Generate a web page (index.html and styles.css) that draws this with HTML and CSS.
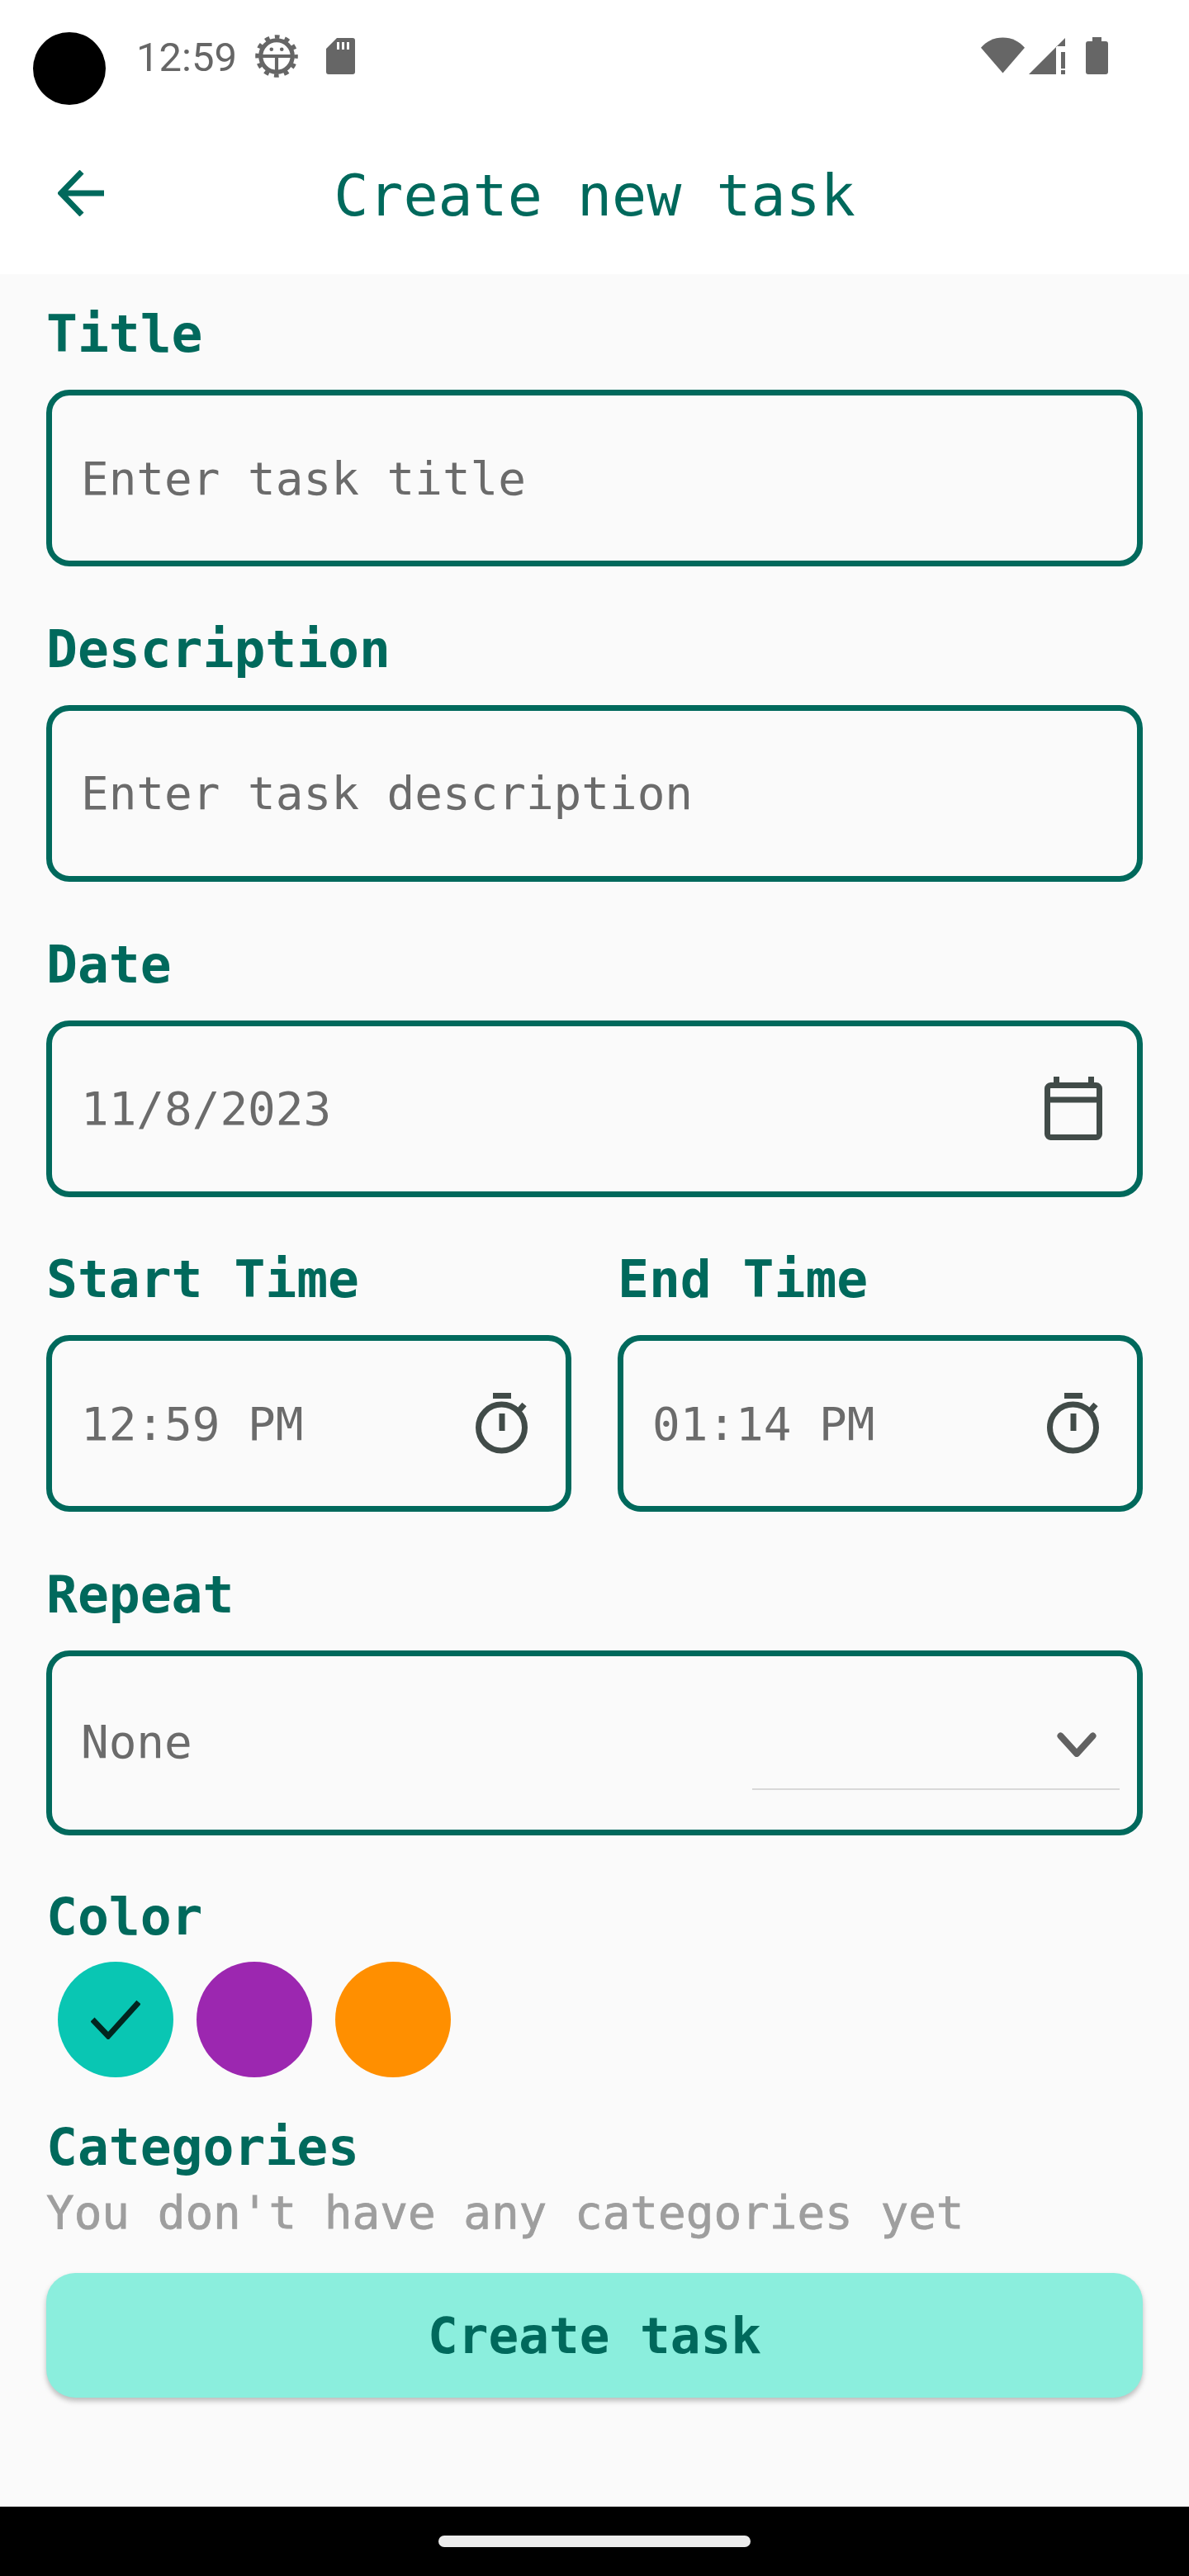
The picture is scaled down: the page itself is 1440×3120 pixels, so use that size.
FILE: index.html
```html
<!DOCTYPE html>
<html lang="en">
<head>
<meta charset="utf-8">
<title>Create new task</title>
<link rel="stylesheet" href="styles.css">
</head>
<body>
<div class="screen">
  <header class="top">
    <div class="status">
      <div class="status-left">
        <span class="camera"></span>
        <span class="clock">12:59</span>
        <svg class="ic-gear" viewBox="0 0 50 50"><circle cx="25" cy="25" r="22.600" fill="none" stroke="#666" stroke-width="4.400" stroke-dasharray="5.600 6.230" stroke-dashoffset="2.800"/><circle cx="25" cy="25" r="18.500" fill="#fff" stroke="#666" stroke-width="5"/><path class="st" d="M7 23h36v4H27v16h-4V27H7z"/><circle class="st" cx="19" cy="17" r="2.200"/><circle class="st" cx="31" cy="17" r="2.200"/></svg>
        <svg class="ic-sd" viewBox="0 0 35 44"><path fill-rule="evenodd" class="st" d="M13 0h19a3 3 0 0 1 3 3v38a3 3 0 0 1-3 3H3a3 3 0 0 1-3-3V13zM13 5v9h3V5zM19 5v9h3V5zM25 5v9h3V5z"/></svg>
      </div>
      <div class="status-right">
        <svg class="ic-wifi" viewBox="0 0 54 44"><path class="st" d="M0 12.500C7 4.500 16 0 27 0s20 4.500 27 12.500L27 44z"/></svg>
        <svg class="ic-signal" viewBox="0 0 44 44"><path class="st" d="M44 0v10H33v34H0zM39 17h5v20h-5zM39 39h5v5h-5z"/></svg>
        <svg class="ic-battery" viewBox="0 0 27 45"><path class="st" d="M8 0h11v5h5a3 3 0 0 1 3 3v34a3 3 0 0 1-3 3H3a3 3 0 0 1-3-3V8a3 3 0 0 1 3-3h5z"/></svg>
      </div>
    </div>
    <div class="appbar">
      <svg class="ic-back" viewBox="0 0 56 56"><path d="M56 28H4M29 2L4 28l25 26" fill="none" stroke="#00695c" stroke-width="7"/></svg>
      <h1 class="page-title">Create new task</h1>
    </div>
  </header>

  <main class="form">
    <section class="field">
      <label class="label">Title</label>
      <div class="box"><span class="value">Enter task title</span></div>
    </section>
    <section class="field">
      <label class="label">Description</label>
      <div class="box"><span class="value">Enter task description</span></div>
    </section>
    <section class="field">
      <label class="label">Date</label>
      <div class="box">
        <span class="value">11/8/2023</span>
        <svg class="ic-cal" viewBox="0 0 70 77"><path d="M3.500 14.500a4 4 0 0 1 4-4h55a4 4 0 0 1 4 4v55a4 4 0 0 1-4 4h-55a4 4 0 0 1-4-4zM3.500 28h63M14.500 0v10M56.500 0v10" fill="none" stroke="#414b48" stroke-width="7"/></svg>
      </div>
    </section>
    <div class="two-col">
      <section class="field">
        <label class="label">Start Time</label>
        <div class="box">
          <span class="value">12:59 PM</span>
          <svg class="ic-timer" viewBox="0 0 64 74"><circle cx="31.500" cy="42" r="28" fill="none" stroke="#414b48" stroke-width="7"/><path d="M21 3.500h22M32 25v21M52 22l7-8" fill="none" stroke="#414b48" stroke-width="7"/></svg>
        </div>
      </section>
      <section class="field">
        <label class="label">End Time</label>
        <div class="box">
          <span class="value">01:14 PM</span>
          <svg class="ic-timer" viewBox="0 0 64 74"><circle cx="31.500" cy="42" r="28" fill="none" stroke="#414b48" stroke-width="7"/><path d="M21 3.500h22M32 25v21M52 22l7-8" fill="none" stroke="#414b48" stroke-width="7"/></svg>
        </div>
      </section>
    </div>
    <section class="field">
      <label class="label">Repeat</label>
      <div class="box box-select">
        <span class="value">None</span>
        <svg class="ic-chev" viewBox="0 0 48 30"><path d="M4.500 4.500L24 26 43.500 4.500" fill="none" stroke="#616161" stroke-width="8" stroke-linecap="round" stroke-linejoin="round"/></svg>
        <span class="underline"></span>
      </div>
    </section>
    <section class="field field-color">
      <label class="label">Color</label>
      <div class="swatches">
        <span class="swatch teal"><svg class="ic-check" viewBox="0 0 60 48"><path d="M2 24l19 20L58 3" fill="none" stroke="#02251f" stroke-width="7"/></svg></span>
        <span class="swatch purple"></span>
        <span class="swatch orange"></span>
      </div>
    </section>
    <section class="field-cat">
      <label class="label">Categories</label>
      <p class="empty">You don't have any categories yet</p>
    </section>
    <button class="submit">Create task</button>
  </main>

  <nav class="navbar"><span class="pill"></span></nav>
</div>
</body>
</html>
```
FILE: styles.css
```css
* { box-sizing: border-box; }
html, body { margin: 0; padding: 0; }
body { background: #fafafa; font-family: "DejaVu Sans Mono", "Liberation Mono", monospace; letter-spacing: -0.002em; }
.screen { width: 1440px; height: 3120px; display: flex; flex-direction: column; background: #fafafa; }
.top { height: 332px; background: #fff; flex: none; }
.status { height: 135px; display: flex; justify-content: space-between; padding: 39px 98px 0 40px; }
.status-left { display: flex; align-items: flex-start; }
.camera { width: 88px; height: 88px; border-radius: 50%; background: #000; }
.clock { font-family: Roboto, sans-serif; font-size: 49px; line-height: 56px; color: #666; margin: 3px 0 0 37px; letter-spacing: 0; }
.st { fill: #666; }
.ic-gear { width: 52px; height: 52px; margin: 3px 0 0 22px; }
.ic-sd { width: 35px; height: 44px; margin: 7px 0 0 34px; }
.status-right { display: flex; align-items: flex-start; padding-top: 6px; }
.ic-wifi { width: 53px; height: 44px; }
.ic-signal { width: 44px; height: 44px; margin: 1px 0 0 5px; }
.ic-battery { width: 27px; height: 45px; margin-left: 25px; }
.appbar { height: 197px; position: relative; display: flex; align-items: flex-start; justify-content: center; }
.ic-back { position: absolute; left: 70px; top: 71px; width: 56px; height: 56px; }
.page-title { margin: 61px 0 0; font-size: 70px; line-height: 82px; font-weight: 400; color: #00695c; }
.form { flex: 1; padding: 31px 56px 0; display: flex; flex-direction: column; gap: 58.75px; }
.label { display: block; font-size: 63px; line-height: 83px; height: 83px; margin-bottom: 26px; font-weight: 700; color: #00695c; }
.box { height: 214px; border: 7px solid #00695c; border-radius: 28px; display: flex; align-items: center; justify-content: space-between; padding: 0 42px 0 35px; position: relative; }
.value { font-size: 56px; color: #6b6b6b; }
.ic-cal { width: 70px; height: 77px; }
.two-col { display: grid; grid-template-columns: 1fr 1fr; gap: 56px; }
.ic-timer { width: 64px; height: 74px; margin-right: 3px; }
.box-select { height: 224px; padding-bottom: 4px; }
.ic-chev { position: absolute; left: 1217px; top: 92px; width: 48px; height: 30px; }
.underline { position: absolute; left: 848px; right: 21px; top: 160px; height: 2px; background: #d8d8d8; }
.field-color { margin-top: -2px; }
.field-color .label { margin-bottom: 13px; }
.swatches { display: flex; gap: 28px; padding-left: 14px; }
.swatch { width: 140px; height: 140px; border-radius: 50%; display: flex; align-items: center; justify-content: center; }
.teal { background: #09c6b3; }
.purple { background: #9c27b0; }
.orange { background: #ff8f00; }
.ic-check { width: 60px; height: 48px; }
.field-cat { margin-top: -16px; }
.field-cat .label { margin: 0; }
.empty { margin: 0; font-size: 56px; line-height: 76px; color: #9e9e9e; -webkit-text-stroke: 0.8px #9e9e9e; }
.submit { height: 151px; margin-top: -23.5px; flex: none; border: 0; border-radius: 35px; background: #8beedd; color: #00695c; font: 700 61px "DejaVu Sans Mono", monospace; box-shadow: 0 4px 6px rgba(0,0,0,.25); }
.navbar { height: 84px; flex: none; background: #000; display: flex; justify-content: center; padding-top: 35px; }
.pill { width: 378px; height: 14px; border-radius: 7px; background: #ececec; }
```
